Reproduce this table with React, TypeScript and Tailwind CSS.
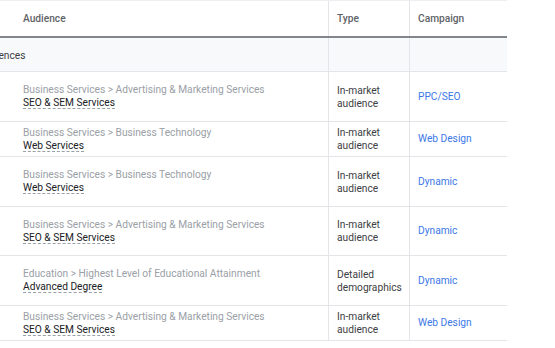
import React from 'react';

type Row = {
    category: string;
    name: string;
    type: string[];
    campaign: string;
    h: string;
};

const rows: Row[] = [
    { category: 'Business Services > Advertising & Marketing Services', name: 'SEO & SEM Services', type: ['In-market', 'audience'], campaign: 'PPC/SEO', h: 'h-[50px]' },
    { category: 'Business Services > Business Technology', name: 'Web Services', type: ['In-market', 'audience'], campaign: 'Web Design', h: 'h-[35px]' },
    { category: 'Business Services > Business Technology', name: 'Web Services', type: ['In-market', 'audience'], campaign: 'Dynamic', h: 'h-[50px]' },
    { category: 'Business Services > Advertising & Marketing Services', name: 'SEO & SEM Services', type: ['In-market', 'audience'], campaign: 'Dynamic', h: 'h-[49px]' },
    { category: 'Education > Highest Level of Educational Attainment', name: 'Advanced Degree', type: ['Detailed', 'demographics'], campaign: 'Dynamic', h: 'h-[50px]' },
    { category: 'Business Services > Advertising & Marketing Services', name: 'SEO & SEM Services', type: ['In-market', 'audience'], campaign: 'Web Design', h: 'h-[35px]' },
];

function App() {
    return (
        <div className="w-[555px] h-[348px] overflow-hidden bg-white font-['Roboto',sans-serif] text-[10.2px] leading-[12px]">
            <div className="w-[507px] border-t border-[#eceff1]">
                {/* header */}
                <div className="flex h-[37px] border-b-2 border-[#80868b] text-[#5f6368] font-medium">
                    <div className="w-[328px] flex items-center pl-[23px]">Audience</div>
                    <div className="w-[81px] flex items-center pl-[8px] border-l border-[#e3e5e8]">Type</div>
                    <div className="flex-1 flex items-center pl-[8px] border-l border-[#e3e5e8]">Campaign</div>
                </div>

                {/* group row */}
                <div className="flex h-[34px] bg-[#f8f9fa] border-b border-[#e3e5e8] text-[#3c4043]">
                    <div className="w-[328px] flex items-center pt-[2px] overflow-hidden">
                        <span className="ml-[-22px] whitespace-nowrap">Audiences</span>
                    </div>
                    <div className="w-[81px] border-l border-[#e3e5e8]" />
                    <div className="flex-1 border-l border-[#e3e5e8]" />
                </div>

                {rows.map((r, i) => (
                    <div key={i} className={`flex ${r.h} border-b border-[#e3e5e8]`}>
                        <div className="w-[328px] flex flex-col justify-center pl-[23px]">
                            <span className="text-[#9aa0a6]">{r.category}</span>
                            <span className="self-start text-[#202124] border-b border-dashed border-[#9aa0a6] leading-[11px] mt-[1px]">
                                {r.name}
                            </span>
                        </div>
                        <div className="w-[81px] flex flex-col justify-center pl-[8px] border-l border-[#e3e5e8] text-[#3c4043] leading-[13px]">
                            {r.type.map((t) => (
                                <span key={t}>{t}</span>
                            ))}
                        </div>
                        <div className="flex-1 flex items-center pl-[8px] border-l border-[#e3e5e8] text-[#3b78e7]">
                            {r.campaign}
                        </div>
                    </div>
                ))}
            </div>
        </div>
    );
}

export default App;
